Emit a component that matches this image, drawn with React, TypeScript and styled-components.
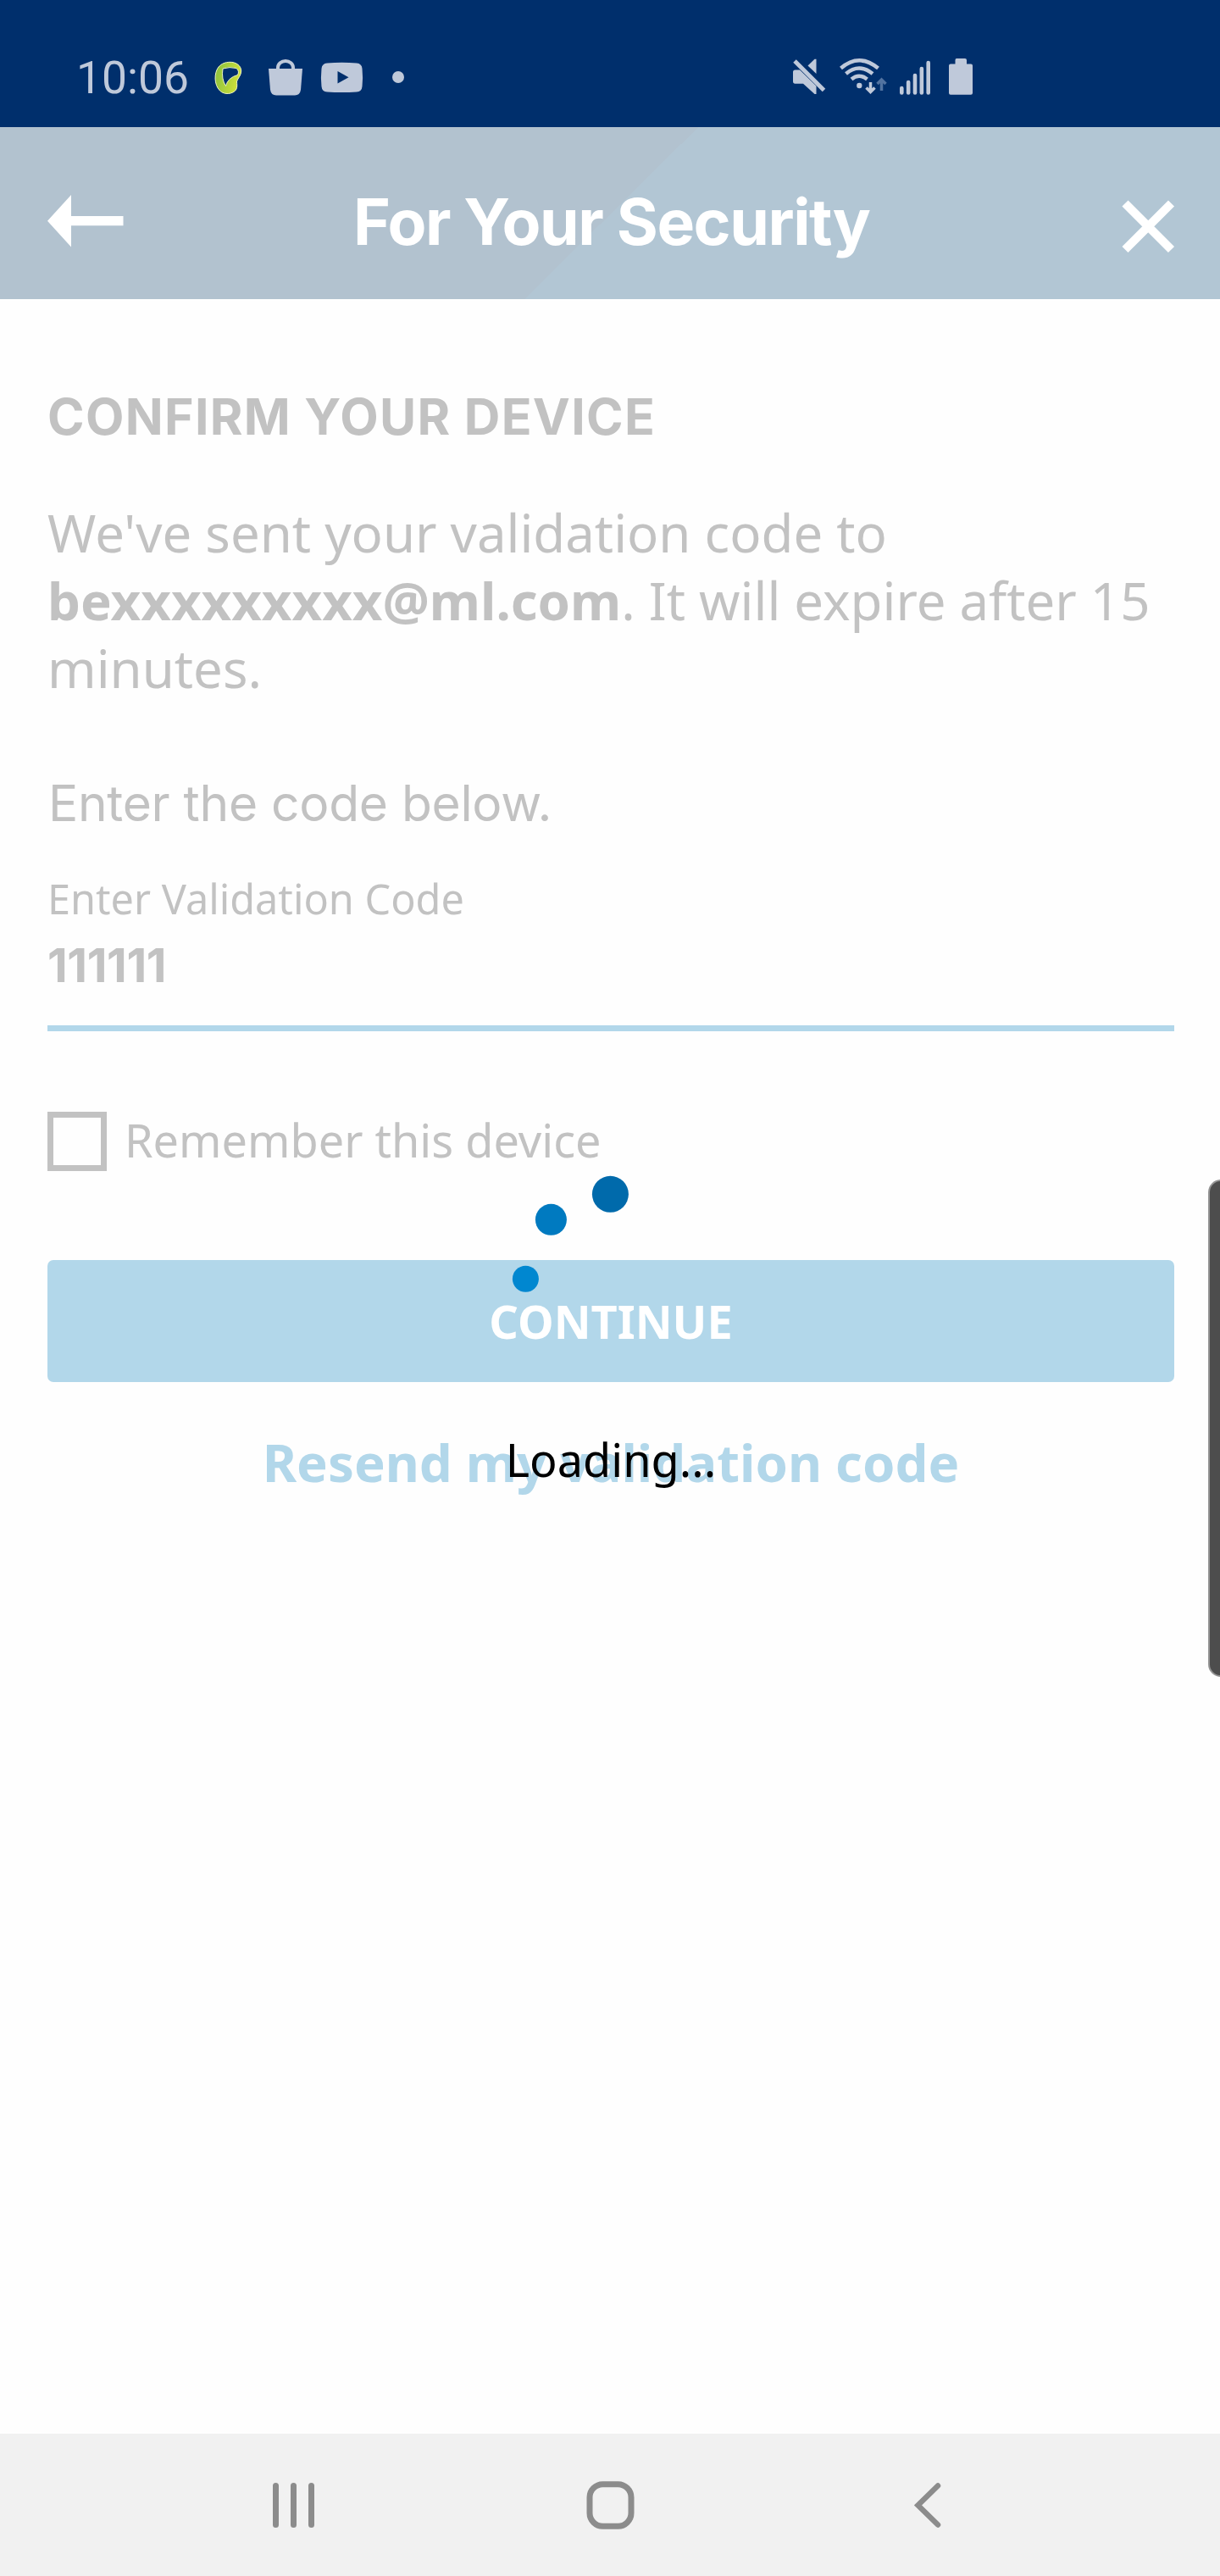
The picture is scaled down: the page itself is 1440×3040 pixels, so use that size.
import React from "react";
import styled, { createGlobalStyle } from "styled-components";

const Global = createGlobalStyle`
  body { margin: 0; background: #fefefe; }
  *, *::before, *::after { box-sizing: border-box; }
  h1, h2, p { margin: 0; }
  button { border: 0; padding: 0; background: none; font: inherit; display: block; }
  svg { display: block; flex: none; }
`;

const noto = `"Noto Sans", "Open Sans", sans-serif`;
const inter = `Inter, "Noto Sans", sans-serif`;

const Screen = styled.div`
  position: relative;
  display: flex;
  flex-direction: column;
  width: 1440px;
  height: 3040px;
  overflow: hidden;
  background: #fefefe;
  color: #c2c2c2;
  font-family: ${noto};
`;

const StatusBar = styled.div`
  display: flex;
  justify-content: space-between;
  height: 150px;
  padding: 62px 292px 0 90px;
  background: #002f6c;
  color: #bfc9da;
`;

const StatusGroup = styled.div`
  display: flex;
  height: 60px;
`;

const Clock = styled.span`
  width: 155px;
  font: 400 53.4px/60px Roboto, sans-serif;
`;

const Header = styled.header`
  display: grid;
  grid-template-columns: 110px 1fr 80px;
  height: 203px;
  padding: 67px 46px 0;
  background: linear-gradient(135.3deg, #b2c2cf 0 50.1%, #b2c6d4 50.1% 100%);
  color: #fff;
`;

const Title = styled.h1`
  padding-left: 261px;
  font: 700 75px/90px ${inter};
  letter-spacing: -1.45px;
  white-space: nowrap;
`;

const Content = styled.main`
  flex: 1;
  display: flex;
  flex-direction: column;
  padding: 104px 54px 0 56px;
`;

const Heading = styled.h2`
  font: 700 59px/70px ${inter};
  letter-spacing: 1.3px;
  white-space: nowrap;
`;

const Message = styled.p`
  margin-top: 61px;
  font-size: 61.7px;
  line-height: 80px;
  white-space: nowrap;
`;

const Prompt = styled.p`
  margin: 85px 0 0 1px;
  font: 400 58.7px/70px ${inter};
  letter-spacing: -0.3px;
`;

const Field = styled.label`
  display: flex;
  flex-direction: column;
  height: 187px;
  margin-top: 47px;
  border-bottom: 7px solid #b2d7ea;
`;

const FieldLabel = styled.span`
  font-size: 48.6px;
  line-height: 60px;
`;

const FieldValue = styled.span`
  margin-top: 14px;
  font: 700 55px/70px ${inter};
  letter-spacing: -0.35px;
`;

const CheckRow = styled.div`
  display: flex;
  gap: 21px;
  height: 70px;
  margin-top: 95px;
`;

const Checkbox = styled.span`
  width: 70px;
  height: 70px;
  border: 7px solid #c2c2c2;
`;

const CheckLabel = styled.span`
  font-size: 54px;
  line-height: 66px;
`;

const Primary = styled.button`
  height: 144px;
  margin-top: 105px;
  border-radius: 7px;
  background: #b2d7ea;
  color: #fff;
  font: 700 54px/144px ${noto};
`;

const Resend = styled.button`
  margin-top: 54px;
  color: #b2d7ea;
  font: 700 61.7px/80px ${noto};
`;

const Loader = styled.div`
  position: absolute;
  top: 1380px;
  left: 520px;
  display: flex;
  flex-direction: column;
  align-items: center;
  width: 402px;
`;

const LoaderText = styled.span`
  margin-top: 125px;
  color: #000;
  font-size: 54px;
  line-height: 70px;
`;

const EdgeHandle = styled.div`
  position: absolute;
  top: 1392px;
  right: -16px;
  width: 30px;
  height: 587px;
  border: 2px solid #949494;
  border-radius: 16px;
  background: #4d4d4d;
`;

const NavBar = styled.nav`
  display: flex;
  justify-content: space-between;
  height: 168px;
  padding: 54px 321px 0 318px;
  background: #f1f1f1;
`;

function LeafLogo() {
  return (
    <svg width="45" height="60" viewBox="245 62 45 60">
      <defs>
        <linearGradient id="leaf" x1="0" y1="0" x2="1" y2="0.3">
          <stop offset="0" stopColor="#86bf40" />
          <stop offset="0.5" stopColor="#a9cf3c" />
          <stop offset="1" stopColor="#cfe03a" />
        </linearGradient>
      </defs>
      <path d="M271 73.300C279 73 285 78 284.700 84C284.600 89 281 92 279.500 96C279.500 99 280.500 103 278.500 106C275 111 265 112.500 259.500 107C252.500 100 252.500 86 258 79C261.500 75 266 73.500 271 73.300Z" fill="url(#leaf)" stroke="#eef6c4" strokeWidth="1" />
      <path d="M263 81Q271 78.500 279 80.500Q283 84 280.500 88.500Q269 91.500 266.500 101.500Q261 93 263 81Z" fill="#002f6c" stroke="#eef6c4" strokeWidth="1" />
    </svg>
  );
}

function BagIcon() {
  return (
    <svg width="80" height="60" viewBox="290 62 80 60">
      <path d="M317 81H357L355 106Q354 112.500 348 112.500H326Q320 112.500 319 106Z" fill="#bfc9da" />
      <path d="M328 82V80A9 8 0 0 1 346 80V82" fill="none" stroke="#bfc9da" strokeWidth="4" />
    </svg>
  );
}

function VideoIcon() {
  return (
    <svg width="70" height="60" viewBox="370 62 70 60">
      <path d="M386 74.500Q403.500 73 421 74.500Q427 75 427.500 81Q428.600 91.500 427.500 102Q427 108 421 108.500Q403.500 109.500 386 108.500Q380 108 379.500 102Q378.400 91.500 379.500 81Q380 75 386 74.500Z" fill="#bfc9da" />
      <path d="M398.500 84V98.500L411.500 91.300Z" fill="#002f6c" />
    </svg>
  );
}

function MoreDot() {
  return (
    <svg width="40" height="60" viewBox="440 62 40 60">
      <circle cx="470" cy="91" r="7" fill="#bfc9da" />
    </svg>
  );
}

function MuteIcon() {
  return (
    <svg width="50" height="60" viewBox="930 62 50 60">
      <path d="M936 85Q936 82.500 938.500 82.500H944L963.500 101.500V111L961.500 111L948 98.700H938.500Q936 98.700 936 96Z" fill="#bfc9da" />
      <path d="M953.500 77.500L961.500 69.800H963.500V87Z" fill="#bfc9da" />
      <path d="M938 72L972.500 106.500" stroke="#bfc9da" strokeWidth="5" />
    </svg>
  );
}

function WifiIcon() {
  return (
    <svg width="70" height="60" viewBox="980 62 70 60" fill="none" stroke="#bfc9da" strokeWidth="4.500">
      <path d="M992.500 80.500Q1014 62 1036.500 80.500M998.500 87Q1014 74 1030 87M1005 93.500Q1014 86 1023.500 93.500" />
      <circle cx="1014.300" cy="101" r="3.200" fill="#bfc9da" stroke="none" />
      <path d="M1027.500 97V109M1022.500 103.500L1027.500 108.500L1032.500 103.500" strokeWidth="3.500" />
      <path d="M1040.500 107V94M1035.500 99L1040.500 94L1045.500 99" stroke="#5273a0" strokeWidth="3.500" />
    </svg>
  );
}

const signalTops = [104, 97, 89, 81, 74];

function SignalIcon() {
  return (
    <svg width="60" height="60" viewBox="1050 62 60 60" stroke="#bfc9da" strokeWidth="4.600" strokeLinecap="round">
      {signalTops.map((top, i) => (
        <path key={top} d={`M${1064.300 + i * 7.850} ${top}V109.500`} />
      ))}
    </svg>
  );
}

function BatteryIcon() {
  return (
    <svg width="38" height="60" viewBox="1110 62 38 60">
      <path d="M1129 69H1139Q1141 69 1141 71V75.500H1146Q1148 75.500 1148 77.500V109.700Q1148 111.700 1146 111.700H1122Q1120 111.700 1120 109.700V77.500Q1120 75.500 1122 75.500H1127.500V71Q1127.500 69 1129 69Z" fill="#bfc9da" />
    </svg>
  );
}

function BackArrow() {
  return (
    <svg width="110" height="90" viewBox="46 217 110 90">
      <path d="M56 260.700L84 230V255H145.500V266.300H84V291.500Z" fill="#fff" />
    </svg>
  );
}

function CloseIcon() {
  return (
    <svg width="80" height="90" viewBox="1314 217 80 90">
      <path d="M1328 240L1382.500 294.500M1382.500 240L1328 294.500" stroke="#fff" strokeWidth="10" />
    </svg>
  );
}

function SpinnerDots() {
  return (
    <svg width="402" height="182" viewBox="520 1380 402 182">
      <circle cx="720.400" cy="1409.300" r="21.500" fill="#006aab" />
      <circle cx="650.400" cy="1439.300" r="18.500" fill="#007ac0" />
      <circle cx="620.400" cy="1509.300" r="15.500" fill="#0087d0" />
    </svg>
  );
}

function RecentsIcon() {
  return (
    <svg width="60" height="60" viewBox="318 2926 60 60" stroke="#8c8c8c" strokeWidth="7" strokeLinecap="round">
      <path d="M325.500 2933.500V2979.500M346.500 2933.500V2979.500M367.500 2933.500V2979.500" />
    </svg>
  );
}

function HomeIcon() {
  return (
    <svg width="60" height="60" viewBox="696.500 2926 60 60" overflow="visible">
      <rect x="695.500" y="2931.700" width="49" height="49.500" rx="15.500" fill="none" stroke="#8c8c8c" strokeWidth="7" />
    </svg>
  );
}

function BackIcon() {
  return (
    <svg width="44" height="60" viewBox="1075 2926 44 60">
      <path d="M1107 2933.500L1083.500 2956.500L1107 2979.500" fill="none" stroke="#8c8c8c" strokeWidth="6.500" strokeLinecap="round" />
    </svg>
  );
}

export default function App() {
  return (
    <Screen>
      <Global />
      <StatusBar>
        <StatusGroup>
          <Clock>10:06</Clock>
          <LeafLogo />
          <BagIcon />
          <VideoIcon />
          <MoreDot />
        </StatusGroup>
        <StatusGroup>
          <MuteIcon />
          <WifiIcon />
          <SignalIcon />
          <BatteryIcon />
        </StatusGroup>
      </StatusBar>
      <Header>
        <BackArrow />
        <Title>For Your Security</Title>
        <CloseIcon />
      </Header>
      <Content>
        <Heading>CONFIRM YOUR DEVICE</Heading>
        <Message>
          We've sent your validation code to
          <br />
          <b>bexxxxxxxxx@ml.com</b>. It will expire after 15
          <br />
          minutes.
        </Message>
        <Prompt>Enter the code below.</Prompt>
        <Field>
          <FieldLabel>Enter Validation Code</FieldLabel>
          <FieldValue>111111</FieldValue>
        </Field>
        <CheckRow>
          <Checkbox />
          <CheckLabel>Remember this device</CheckLabel>
        </CheckRow>
        <Primary>CONTINUE</Primary>
        <Resend>Resend my validation code</Resend>
      </Content>
      <NavBar>
        <RecentsIcon />
        <HomeIcon />
        <BackIcon />
      </NavBar>
      <EdgeHandle />
      <Loader>
        <SpinnerDots />
        <LoaderText>Loading...</LoaderText>
      </Loader>
    </Screen>
  );
}
